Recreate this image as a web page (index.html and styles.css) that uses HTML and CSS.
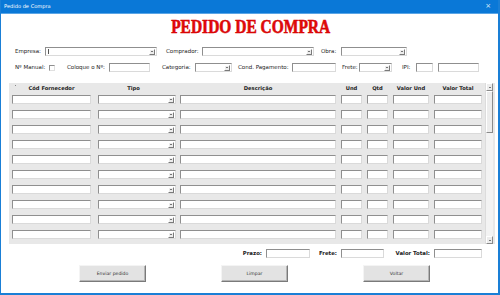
FILE: index.html
```
<!DOCTYPE html>
<html lang="pt">
<head>
<meta charset="utf-8">
<title>Pedido de Compra</title>
<link rel="stylesheet" href="styles.css">
</head>
<body>
<div class="window">
  <div class="titlebar"><span class="tb-text">Pedido de Compra</span><span class="tb-close">×</span></div>
  <div class="heading"><h1 class="title">PEDIDO DE COMPRA</h1></div>

  <div class="row row1">
    <span class="lbl l-empresa">Empresa:</span>
    <div class="combo w-empresa"><span class="cursor"></span><span class="dd"></span></div>
    <span class="lbl l-comprador">Comprador:</span>
    <div class="combo w-comprador"><span class="dd"></span></div>
    <span class="lbl l-obra">Obra:</span>
    <div class="combo w-obra"><span class="dd"></span></div>
  </div>

  <div class="row row2">
    <span class="lbl l-manual">Nº Manual:</span>
    <span class="check"></span>
    <span class="lbl l-coloque">Coloque o Nº:</span>
    <div class="box w-coloque"></div>
    <span class="lbl l-categoria">Categoria:</span>
    <div class="combo w-categoria"><span class="dd"></span></div>
    <span class="lbl l-cond">Cond. Pagamento:</span>
    <div class="box w-cond"></div>
    <span class="lbl l-frete">Frete:</span>
    <div class="combo w-frete"><span class="dd"></span></div>
    <span class="lbl l-ipi">IPI:</span>
    <div class="box w-ipi1"></div>
    <div class="box w-ipi2"></div>
  </div>

  <div class="panel">
    <div class="table">
      <div class="thead">
        <div class="th c1">Cód Fornecedor</div>
        <div class="th c2 th-tipo">Tipo</div>
        <div class="th c3">Descrição</div>
        <div class="th c4">Und</div>
        <div class="th c5">Qtd</div>
        <div class="th c6">Valor Und</div>
        <div class="th c7">Valor Total</div>
      </div>
      <div class="tbody">
        <div class="box c1"></div><div class="combo c2"><span class="dd"></span></div><div class="box c3"></div><div class="box c4"></div><div class="box c5"></div><div class="box c6"></div><div class="box c7"></div>
        <div class="box c1"></div><div class="combo c2"><span class="dd"></span></div><div class="box c3"></div><div class="box c4"></div><div class="box c5"></div><div class="box c6"></div><div class="box c7"></div>
        <div class="box c1"></div><div class="combo c2"><span class="dd"></span></div><div class="box c3"></div><div class="box c4"></div><div class="box c5"></div><div class="box c6"></div><div class="box c7"></div>
        <div class="box c1"></div><div class="combo c2"><span class="dd"></span></div><div class="box c3"></div><div class="box c4"></div><div class="box c5"></div><div class="box c6"></div><div class="box c7"></div>
        <div class="box c1"></div><div class="combo c2"><span class="dd"></span></div><div class="box c3"></div><div class="box c4"></div><div class="box c5"></div><div class="box c6"></div><div class="box c7"></div>
        <div class="box c1"></div><div class="combo c2"><span class="dd"></span></div><div class="box c3"></div><div class="box c4"></div><div class="box c5"></div><div class="box c6"></div><div class="box c7"></div>
        <div class="box c1"></div><div class="combo c2"><span class="dd"></span></div><div class="box c3"></div><div class="box c4"></div><div class="box c5"></div><div class="box c6"></div><div class="box c7"></div>
        <div class="box c1"></div><div class="combo c2"><span class="dd"></span></div><div class="box c3"></div><div class="box c4"></div><div class="box c5"></div><div class="box c6"></div><div class="box c7"></div>
        <div class="box c1"></div><div class="combo c2"><span class="dd"></span></div><div class="box c3"></div><div class="box c4"></div><div class="box c5"></div><div class="box c6"></div><div class="box c7"></div>
        <div class="box c1"></div><div class="combo c2"><span class="dd"></span></div><div class="box c3"></div><div class="box c4"></div><div class="box c5"></div><div class="box c6"></div><div class="box c7"></div>
      </div>
    </div>
    <div class="scroll">
      <div class="sb-btn"><span class="arrow-up"></span></div>
      <div class="sb-track"><div class="sb-thumb"></div></div>
      <div class="sb-btn"><span class="arrow-down"></span></div>
    </div>
  </div>

  <div class="row totals">
    <span class="tl t-prazo">Prazo:</span>
    <div class="box w-prazo"></div>
    <span class="tl t-frete">Frete:</span>
    <div class="box w-tfrete"></div>
    <span class="tl t-total">Valor Total:</span>
    <div class="box w-total"></div>
  </div>

  <div class="buttons">
    <button class="btn">Enviar pedido</button>
    <button class="btn">Limpar</button>
    <button class="btn">Voltar</button>
  </div>
</div>
</body>
</html>
```
FILE: styles.css
```
* { box-sizing: border-box; }
html, body { margin: 0; padding: 0; background: #ffffff; }
body { width: 500px; height: 295px; overflow: hidden; font-family: "DejaVu Sans", sans-serif; color: #222; }

.window {
  width: 500px;
  height: 295px;
  background: #ffffff;
  border-left: 1px solid #1a7fd6;
  border-right: 2px solid #1a7fd6;
  border-bottom: 2px solid #1a7fd6;
  display: flex;
  flex-direction: column;
}

.titlebar {
  height: 14px;
  flex: none;
  background: #0a78d7;
  border-bottom: 1px solid #5aa5e6;
  display: flex;
  align-items: center;
  justify-content: space-between;
  padding: 0 7px 0 3px;
  color: #ffffff;
}
.tb-text { font-size: 5.1px; line-height: 13px; }
.tb-close { font-size: 7px; line-height: 13px; color: #dfeefb; }

.heading {
  height: 33px;
  flex: none;
  padding-top: 3px;
  display: flex;
  justify-content: center;
}
.title {
  margin: 0;
  font-family: "Liberation Serif", serif;
  font-weight: 900;
  font-size: 19.6px;
  line-height: 20px;
  color: #e20a0a;
  transform: scaleX(0.79);
  transform-origin: center;
  margin-left: 3px;
  white-space: nowrap;
  -webkit-text-stroke: 0.6px #d40000;
}

.row {
  display: flex;
  align-items: center;
  height: 9px;
  flex: none;
}
.row1 { padding-left: 14px; }
.row2 { padding-left: 14px; margin-top: 7px; }

.lbl {
  font-size: 5.5px;
  line-height: 9px;
  white-space: nowrap;
  color: #222;
  flex: none;
}

.box, .combo {
  height: 9px;
  background: #ffffff;
  border-top: 1px solid #8f8f8f;
  border-left: 1px solid #8f8f8f;
  border-right: 1px solid #dadada;
  border-bottom: 1px solid #dadada;
  flex: none;
}
.combo {
  display: flex;
  align-items: center;
  justify-content: flex-end;
}
.dd {
  width: 6px;
  height: 6px;
  margin-right: 1px;
  background: #ececec;
  border-top: 1px solid #ffffff;
  border-left: 1px solid #ffffff;
  border-right: 1px solid #7a7a7a;
  border-bottom: 1px solid #7a7a7a;
  display: flex;
  align-items: center;
  justify-content: center;
}
.dd::after {
  content: "";
  width: 0;
  height: 0;
  border-left: 1.5px solid transparent;
  border-right: 1.5px solid transparent;
  border-top: 1.5px solid #000;
}
.cursor {
  width: 1px;
  height: 5px;
  background: #555;
  margin-right: auto;
  margin-left: 2px;
}

/* row 1 widths */
.l-empresa { width: 30px; }
.w-empresa { width: 112px; }
.l-comprador { width: 36px; margin-left: 9px; }
.w-comprador { width: 112px; }
.l-obra { width: 20px; margin-left: 7px; }
.w-obra { width: 66px; }

/* row 2 widths */
.l-manual { width: 34px; }
.check {
  width: 6px;
  height: 6px;
  flex: none;
  background: #fff;
  border-top: 1px solid #8f8f8f;
  border-left: 1px solid #8f8f8f;
  border-right: 1px solid #e0e0e0;
  border-bottom: 1px solid #e0e0e0;
}
.l-coloque { width: 42px; margin-left: 12px; }
.w-coloque { width: 41px; }
.l-categoria { width: 33px; margin-left: 12px; }
.w-categoria { width: 37px; }
.l-cond { width: 54px; margin-left: 6px; }
.w-cond { width: 44px; }
.l-frete { width: 17px; margin-left: 6px; }
.w-frete { width: 33px; }
.l-ipi { width: 14px; margin-left: 10px; }
.w-ipi1 { width: 17px; }
.w-ipi2 { width: 41px; margin-left: 5px; }

/* grid panel */
.panel {
  flex: none;
  margin-top: 11px;
  margin-left: 8px;
  width: 486px;
  height: 161px;
  background: #e8e8e8;
  display: flex;
  padding-left: 3px;
  padding-right: 2px;
  position: relative;
}
.panel::before {
  content: "";
  position: absolute;
  left: 6px;
  top: 2px;
  width: 1px;
  height: 1px;
  background: #888;
}
.table { width: 470px; flex: none; }
.thead, .tbody {
  display: grid;
  grid-template-columns: 86px 82px 161px 26px 26px 41px 48px;
}
.thead { height: 12px; }
.tbody { row-gap: 6px; grid-auto-rows: 9px; }
.th {
  font-size: 5.2px;
  font-weight: bold;
  line-height: 11px;
  text-align: center;
  color: #222;
  white-space: nowrap;
}
.th-tipo { padding-right: 7px; }
.c1 { width: 79px; }
.c2 { width: 78px; }
.c3 { width: 156px; }
.c4 { width: 21px; }
.c5 { width: 21px; }
.c6 { width: 36px; }
.c7 { width: 48px; }

.scroll {
  width: 8px;
  margin-left: 3px;
  flex: none;
  display: flex;
  flex-direction: column;
  background: #f3f3f3;
  border-left: 1px solid #dcdcdc;
}
.sb-btn {
  height: 8px;
  flex: none;
  background: #ececec;
  border-top: 1px solid #ffffff;
  border-left: 1px solid #ffffff;
  border-right: 1px solid #8a8a8a;
  border-bottom: 1px solid #8a8a8a;
  display: flex;
  align-items: center;
  justify-content: center;
}
.arrow-up {
  width: 0; height: 0;
  border-left: 1.5px solid transparent;
  border-right: 1.5px solid transparent;
  border-bottom: 1.5px solid #000;
}
.arrow-down {
  width: 0; height: 0;
  border-left: 1.5px solid transparent;
  border-right: 1.5px solid transparent;
  border-top: 1.5px solid #000;
}
.sb-track { flex: 1; }
.sb-thumb {
  height: 42px;
  background: #ececec;
  border-top: 1px solid #ffffff;
  border-left: 1px solid #ffffff;
  border-right: 1px solid #8a8a8a;
  border-bottom: 1px solid #8a8a8a;
}

/* totals */
.totals { margin-top: 5px; padding-left: 228px; }
.tl {
  font-size: 5.4px;
  font-weight: bold;
  line-height: 9px;
  text-align: right;
  white-space: nowrap;
  color: #222;
  flex: none;
}
.t-prazo { width: 33px; margin-right: 4px; }
.w-prazo { width: 44px; }
.t-frete { width: 21px; margin-left: 6px; margin-right: 4px; }
.w-tfrete { width: 43px; }
.t-total { width: 38px; margin-left: 8px; margin-right: 4px; }
.w-total { width: 48px; }

/* buttons */
.buttons {
  flex: none;
  margin-top: 7px;
  padding-left: 78px;
  display: flex;
  gap: 75px;
}
.btn {
  width: 67px;
  height: 17px;
  margin: 0;
  padding: 0;
  background: #e3e3e3;
  border-top: 1px solid #f4f4f4;
  border-left: 1px solid #f4f4f4;
  border-right: 1px solid #7a7a7a;
  border-bottom: 1px solid #7a7a7a;
  box-shadow: inset -1px -1px 0 #b5b5b5;
  font-family: "DejaVu Sans", sans-serif;
  font-size: 4.6px;
  color: #333;
}
```
